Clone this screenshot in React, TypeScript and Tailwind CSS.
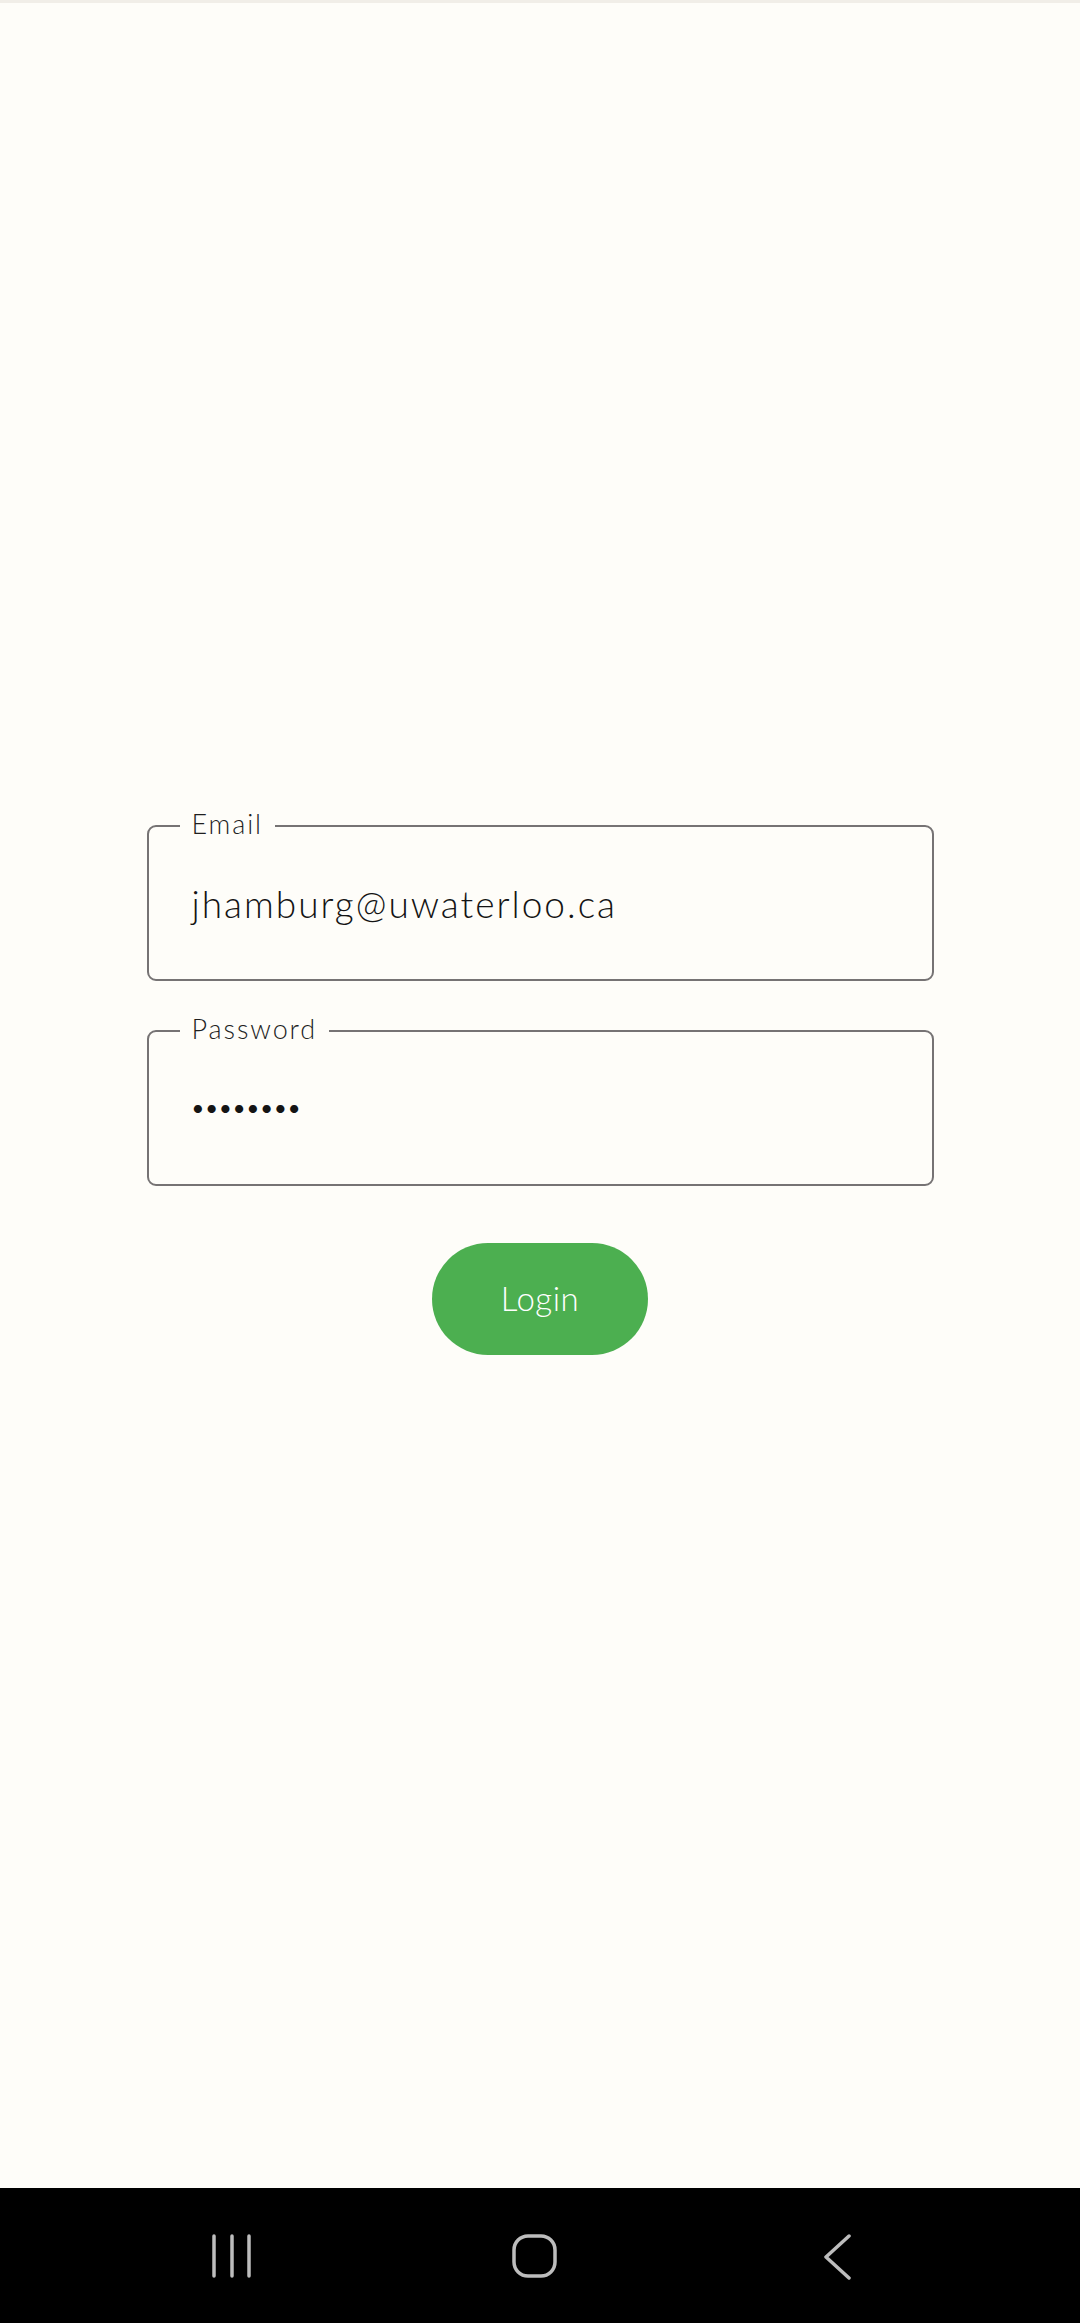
import React from 'react';

const font = { fontFamily: 'Lato, "Noto Sans", sans-serif' };

interface FieldProps {
  label: string;
  children: React.ReactNode;
}

const OutlinedField: React.FC<FieldProps> = ({ label, children }) => {
  return (
    <div className="relative h-[156px] w-full rounded-[9px] border-[2.5px] border-[#767374] flex items-center px-[43px]">
      <span className="absolute left-[31px] top-[-16px] px-[12px] bg-[#fefdf9] text-[27px] leading-[26px] font-light text-[#1f1f1f] tracking-[1.9px]">
        {label}
      </span>
      {children}
    </div>
  );
};

const NavBar: React.FC = () => (
  <div className="h-[135px] bg-black flex items-center shrink-0">
    <div className="relative w-full h-[44px]">
      <svg className="absolute left-[210px] top-0" width="44" height="44" viewBox="0 0 44 44">
        <g stroke="#bdbdbd" strokeWidth="3.5" strokeLinecap="round">
          <line x1="4" y1="2" x2="4" y2="42" />
          <line x1="22" y1="2" x2="22" y2="42" />
          <line x1="39" y1="2" x2="39" y2="42" />
        </g>
      </svg>
      <svg className="absolute left-[512px] top-0" width="46" height="44" viewBox="0 0 46 44">
        <rect x="2" y="2" width="41" height="40" rx="14" fill="none" stroke="#bdbdbd" strokeWidth="3.5" />
      </svg>
      <svg className="absolute left-[822px] top-0" width="30" height="46" viewBox="0 0 30 46">
        <polyline points="27,2 4,23 27,44" fill="none" stroke="#bdbdbd" strokeWidth="3.5" strokeLinecap="round" strokeLinejoin="round" />
      </svg>
    </div>
  </div>
);

export default function App() {
  return (
    <div className="h-[2323px] flex flex-col bg-[#fefdf9]" style={font}>
      <div className="h-[3px] bg-[#f1eee8] shrink-0" />
      <main className="flex-1 pt-[822px]">
        <div className="w-[787px] mx-auto flex flex-col gap-[49px]">
          <OutlinedField label="Email">
            <span className="text-[37px] leading-none text-[#141414] tracking-[2px] font-light">
              jhamburg@uwaterloo.ca
            </span>
          </OutlinedField>
          <OutlinedField label="Password">
            <span className="text-[22px] leading-none text-[#141414] tracking-[1px]">
              ••••••••
            </span>
          </OutlinedField>
        </div>
        <div className="flex justify-center mt-[57px]">
          <button className="w-[216px] h-[112px] rounded-full bg-[#4caf50] text-white text-[33px] font-light tracking-[0.5px]">
            Login
          </button>
        </div>
      </main>
      <NavBar />
    </div>
  );
}
